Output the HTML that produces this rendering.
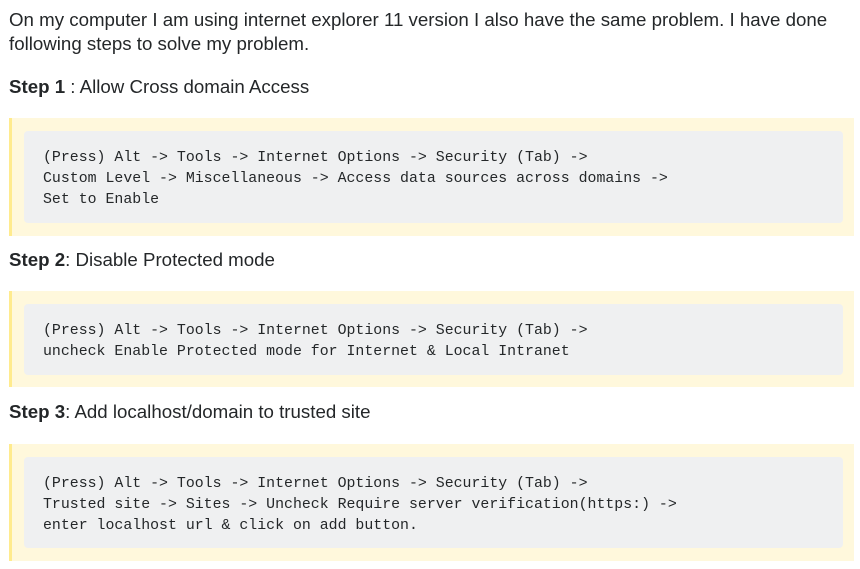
<!DOCTYPE html>
<html><head><style>
body{margin:0;background:#fff;font-family:"Liberation Sans",Arial,sans-serif;color:#242729;font-size:18.7px;}
.p{position:absolute;left:9px;line-height:24px;white-space:nowrap}
.bq{position:absolute;left:9px;width:845px;background:#fff8dc;border-left:3px solid #ffeb8e;box-sizing:border-box}
.code{position:absolute;left:12px;width:819px;background:#eff0f1;border-radius:4px;font-family:"Liberation Mono",monospace;font-size:14.88px;line-height:21px;color:#242729;white-space:pre;box-sizing:border-box;padding:0 0 0 19px}
b{font-weight:bold}
</style></head><body>
<div class="p" style="top:8px">On my computer I am using internet explorer 11 version I also have the same problem. I have done<br>following steps to solve my problem.</div>
<div class="p" style="top:75px"><b>Step 1</b> : Allow Cross domain Access</div>
<div class="bq" style="top:118px;height:118px"><div class="code" style="top:13px;height:92px;padding-top:17px">(Press) Alt -&gt; Tools -&gt; Internet Options -&gt; Security (Tab) -&gt;
Custom Level -&gt; Miscellaneous -&gt; Access data sources across domains -&gt;
Set to Enable</div></div>
<div class="p" style="top:248px"><b>Step 2</b>: Disable Protected mode</div>
<div class="bq" style="top:291px;height:96px"><div class="code" style="top:13px;height:71px;padding-top:17px">(Press) Alt -&gt; Tools -&gt; Internet Options -&gt; Security (Tab) -&gt;
uncheck Enable Protected mode for Internet &amp; Local Intranet</div></div>
<div class="p" style="top:400px"><b>Step 3</b>: Add localhost/domain to trusted site</div>
<div class="bq" style="top:444px;height:117px"><div class="code" style="top:13px;height:91px;padding-top:17px">(Press) Alt -&gt; Tools -&gt; Internet Options -&gt; Security (Tab) -&gt;
Trusted site -&gt; Sites -&gt; Uncheck Require server verification(https:) -&gt;
enter localhost url &amp; click on add button.</div></div>
</body></html>
